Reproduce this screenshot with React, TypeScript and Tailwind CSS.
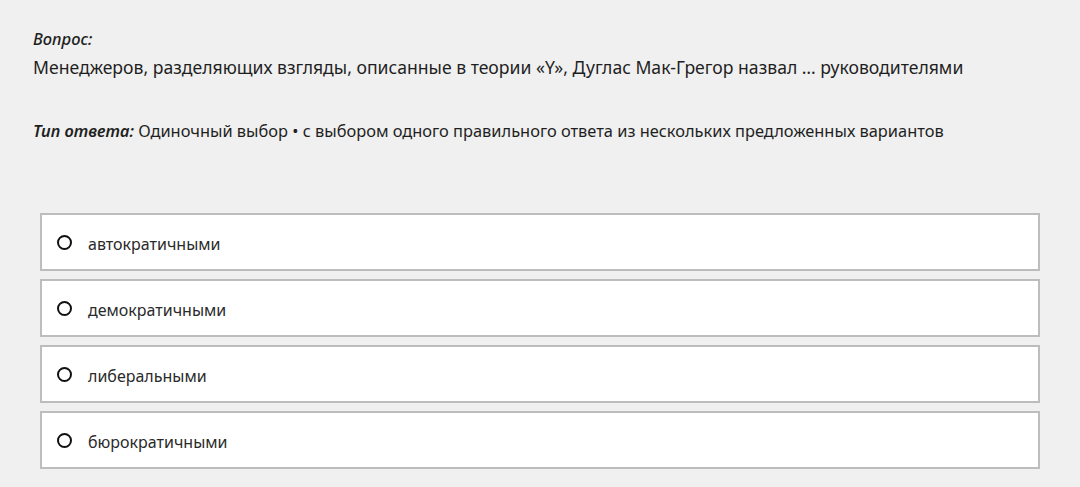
const options = ['автократичными', 'демократичными', 'либеральными', 'бюрократичными']

export default function App() {
  return (
    <div
      className="min-h-[487px] w-full bg-[#f0f0f0] text-[#1f1f1f] pl-[33px] pt-[28px]"
      style={{ fontFamily: '"Noto Sans", "Open Sans", sans-serif' }}
    >
      <p className="italic font-medium text-[16.5px] leading-[22px]">Вопрос:</p>
      <p className="text-[17.6px] leading-[28px] mt-[3px]">
        Менеджеров, разделяющих взгляды, описанные в теории «Y», Дуглас Мак-Грегор назвал … руководителями
      </p>
      <p className="text-[16.4px] leading-[24px] mt-[38px]">
        <span className="italic font-semibold">Тип ответа:</span> Одиночный выбор • с выбором одного правильного ответа из нескольких предложенных вариантов
      </p>

      <div className="mt-[70px] ml-[7px] w-[1000px] flex flex-col gap-[8px]">
        {options.map((o) => (
          <label
            key={o}
            className="h-[58px] flex items-center bg-white border-2 border-[#bdbdbd] pl-[15px]"
          >
            <span className="w-[15px] h-[15px] rounded-full border-2 border-[#111] shrink-0" />
            <span className="ml-[16px] pt-[4px] text-[16px] text-[#2a2a2a]">{o}</span>
          </label>
        ))}
      </div>
    </div>
  )
}
